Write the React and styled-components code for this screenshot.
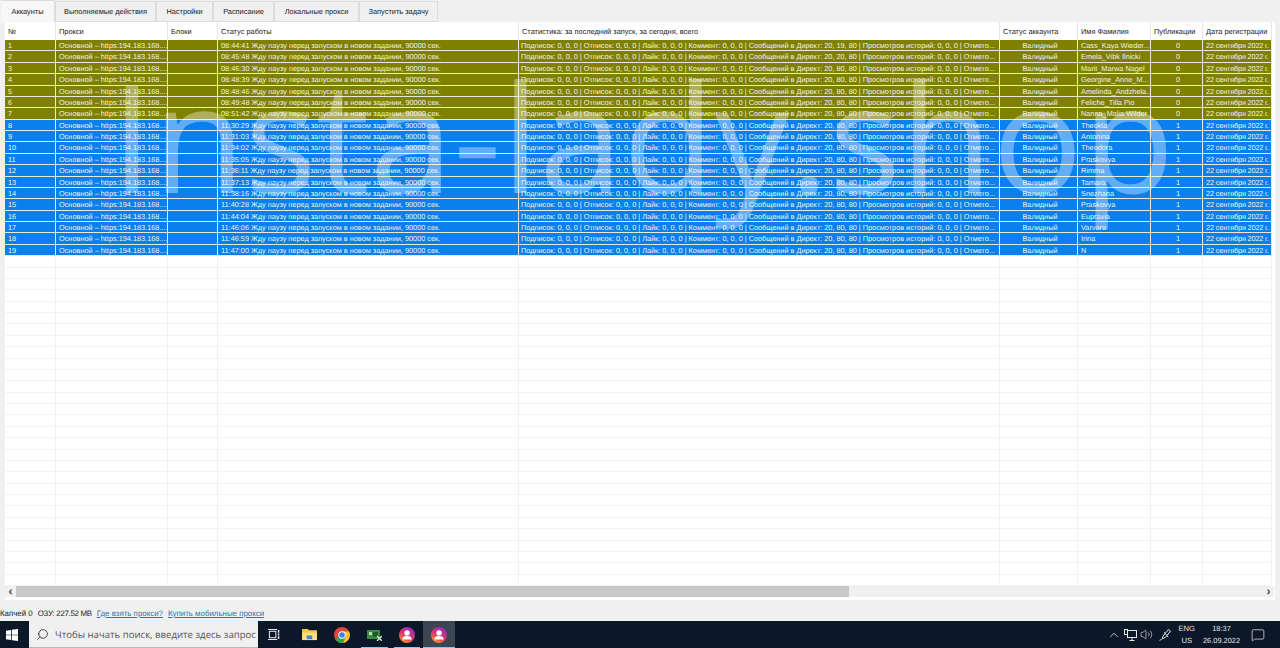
import styled, { createGlobalStyle } from "styled-components";
import { Search, ChevronUp, Volume2, MessageSquare } from "lucide-react";

const COLUMNS = "51px 112px 50px 301px 481px 78px 73px 52px 69px";

const GlobalStyle = createGlobalStyle`
    html, body {
        margin: 0;
        padding: 0;
        height: 100%;
        overflow: hidden;
        background: #f0f0f0;
    }
    body {
        font-family: "Liberation Sans", Arial, sans-serif;
        text-rendering: geometricPrecision;
    }
`;

const tabs = ["Аккаунты", "Выполняемые действия", "Настройки", "Расписание", "Локальные прокси", "Запустить задачу"];
const tabWidths = [54, 101, 57, 61, 85, 79];

const headers = ["№", "Прокси", "Блоки", "Статус работы", "Статистика: за последний запуск, за сегодня, всего", "Статус аккаунта", "Имя Фамилия", "Публикации", "Дата регистрации"];

const accounts = [
    ["08:44:41", "20, 19, 80", "Cass_Kaya Wieder..."],
    ["08:45:48", "20, 20, 80", "Emela_Vibk Ilnicki"],
    ["08:46:30", "20, 80, 80", "Marit_Marwa Nagel"],
    ["08:48:39", "20, 80, 80", "Georgine_Anne_M..."],
    ["08:48:46", "20, 80, 80", "Amelinda_Andzhela..."],
    ["08:49:48", "20, 80, 80", "Feliche_Tilla Pio"],
    ["08:51:42", "20, 80, 80", "Nanna_Malia Wilder"],
    ["11:30:29", "20, 80, 80", "Theokla"],
    ["11:31:03", "20, 80, 80", "Antonina"],
    ["11:34:02", "20, 80, 80", "Theodora"],
    ["11:35:05", "20, 80, 80", "Praskovya"],
    ["11:36:11", "20, 80, 80", "Rimma"],
    ["11:37:13", "20, 80, 80", "Tamara"],
    ["11:38:16", "20, 80, 80", "Snezhana"],
    ["11:40:28", "20, 80, 80", "Praskovya"],
    ["11:44:04", "20, 80, 80", "Eupraxia"],
    ["11:46:06", "20, 80, 80", "Varvara"],
    ["11:46:59", "20, 80, 80", "Irina"],
    ["11:47:00", "20, 80, 80", "N"],
];

function WindowsLogo() {
    return (
        <svg width="12" height="12" viewBox="0 0 14 14" fill="#fff">
            <path d="M0 2 L6 1.1 V6.6 H0 Z" />
            <path d="M6.9 1 L14 0 V6.6 H6.9 Z" />
            <path d="M0 7.4 H6 V12.9 L0 12 Z" />
            <path d="M6.9 7.4 H14 V14 L6.9 13 Z" />
        </svg>
    );
}

function TaskView() {
    return (
        <svg width="12" height="11" viewBox="0 0 13 12" fill="none" stroke="#e8e8e8" strokeWidth="1.1">
            <rect x="1.5" y="2.5" width="7" height="7" />
            <path d="M0 0.6 H10 M0 11.4 H10" />
            <path d="M11.5 1 V4 M11.5 5 V7 M11.5 8 V11" strokeWidth="1.6" />
        </svg>
    );
}

function FolderIcon() {
    return (
        <svg width="15" height="13" viewBox="0 0 16 14">
            <path d="M0 1 H6 L7.5 2.5 H16 V13 H0 Z" fill="#f5c84c" />
            <path d="M0 5 H16 V13 H0 Z" fill="#ffdf7e" />
            <rect x="5" y="8" width="6" height="4" fill="#3d8fc9" />
        </svg>
    );
}

function ChromeIcon() {
    return (
        <svg width="16" height="16" viewBox="0 0 32 32">
            <circle cx="16" cy="16" r="16" fill="#e2453a" />
            <path d="M16 16 L2.1 24 A16 16 0 0 0 18 31.9 L24 18 Z" fill="#2fa551" />
            <path d="M16 9 H30 A16 16 0 0 1 18 31.9 L24 18 Z" fill="#fbc62f" />
            <circle cx="16" cy="16" r="7.4" fill="#fff" />
            <circle cx="16" cy="16" r="5.6" fill="#3f82ee" />
        </svg>
    );
}

function CardIcon() {
    return (
        <svg width="15" height="12" viewBox="0 0 15 12">
            <rect x="0" y="1" width="13" height="9" fill="#3c8a45" />
            <rect x="2" y="3" width="3" height="3" fill="#b6dcae" />
            <rect x="6" y="3" width="5" height="5" fill="#1d5a2a" />
            <path d="M10 7 L15 12 M15 7 L10 12" stroke="#cfe8c8" strokeWidth="1.3" />
        </svg>
    );
}

function InstaIcon({ id }) {
    return (
        <svg width="16" height="16" viewBox="0 0 32 32">
            <defs>
                <linearGradient id={id} x1="0.2" y1="1" x2="0.8" y2="0">
                    <stop offset="0" stopColor="#f7a02c" />
                    <stop offset="0.45" stopColor="#e2336c" />
                    <stop offset="1" stopColor="#8a2fc4" />
                </linearGradient>
            </defs>
            <circle cx="16" cy="16" r="16" fill={`url(#${id})`} />
            <circle cx="16" cy="12" r="5.5" fill="#fff" />
            <path d="M6.5 25 C7 19 11 18 16 18 C21 18 25 19 25.5 25 Z" fill="#fff" />
        </svg>
    );
}

function NetworkIcon() {
    return (
        <svg width="13" height="12" viewBox="0 0 13 12" fill="none" stroke="#e6e6e6" strokeWidth="1">
            <rect x="3.5" y="1.5" width="9" height="7" />
            <path d="M8 8.5 V11 M5.5 11.5 H10.5" />
            <rect x="0.5" y="0.5" width="3" height="5" fill="#0c1727" />
        </svg>
    );
}

function PenIcon() {
    return (
        <svg width="16" height="13" viewBox="-3 0 16 13" fill="none" stroke="#e6e6e6" strokeWidth="1">
            <path d="M4 8 L9.5 1.5 L11.5 3.2 L6 9.7 L3.4 10.6 Z" />
            <path d="M3.4 10.6 C2.4 12 1.4 11.6 0.6 12.4" />
            <path d="M6 4 C4 5 8 6.5 9 9" />
        </svg>
    );
}

function App() {
    return (
        <Page>
            <GlobalStyle />
            <TabBar>
                {tabs.map((tab, i) => (
                    <Tab key={tab} $active={i === 0} $width={tabWidths[i]}>{tab}</Tab>
                ))}
            </TabBar>
            <Content>
                <Table>
                    <HeaderRow>
                        {headers.map(h => <HeaderCell key={h}>{h}</HeaderCell>)}
                    </HeaderRow>
                    <Body>
                        {accounts.map(([time, direct, name], i) => (
                            <Row key={i} $bg={i < 7 ? "#808000" : "#0a7ff0"}>
                                <Cell>{i + 1}</Cell>
                                <Cell>Основной – https:194.183.168....</Cell>
                                <Cell />
                                <Cell>{time} Жду паузу перед запуском в новом задании, 90000 сек.</Cell>
                                <StatCell>Подписок: 0, 0, 0 | Отписок: 0, 0, 0 | Лайк: 0, 0, 0 | Коммент: 0, 0, 0 | Сообщений в Директ: {direct} | Просмотров историй: 0, 0, 0 | Отмето...</StatCell>
                                <Cell $center>Валидный</Cell>
                                <Cell>{name}</Cell>
                                <Cell $center>{i < 7 ? 0 : 1}</Cell>
                                <DateCell>22 сентября 2022 г.</DateCell>
                            </Row>
                        ))}
                        {Array.from({ length: 30 }, (_, i) => (
                            <EmptyRow key={i}>
                                {headers.map(h => <EmptyCell key={h} />)}
                            </EmptyRow>
                        ))}
                    </Body>
                    <ScrollBar>
                        <ScrollArrow>‹</ScrollArrow>
                        <ScrollThumb />
                        <ScrollArrow>›</ScrollArrow>
                    </ScrollBar>
                    <Watermark>Insta-lady.shop</Watermark>
                </Table>
            </Content>
            <StatusBar>
                <span>Капчей 0</span>
                <MemoryText>ОЗУ: 227.52 MB</MemoryText>
                <StatusLink>Где взять прокси?</StatusLink>
                <StatusLink>Купить мобильные прокси</StatusLink>
            </StatusBar>
            <Taskbar>
                <StartButton><WindowsLogo /></StartButton>
                <SearchBox>
                    <Search size={13} color="#333" strokeWidth={1.6} style={{ transform: "scaleX(-1)" }} />
                    <SearchText>Чтобы начать поиск, введите здесь запрос</SearchText>
                </SearchBox>
                <TaskSlot $width={32}><TaskView /></TaskSlot>
                <TaskGap />
                <TaskSlot $width={32}><FolderIcon /></TaskSlot>
                <TaskSlot $width={33}><ChromeIcon /></TaskSlot>
                <TaskSlot $width={33} $running><CardIcon /></TaskSlot>
                <TaskSlot $width={32} $running><InstaIcon id="insta-a" /></TaskSlot>
                <TaskSlot $width={32} $running $active><InstaIcon id="insta-b" /></TaskSlot>
                <Tray>
                    <ChevronUp size={14} color="#e6e6e6" strokeWidth={1.4} />
                    <NetworkIcon />
                    <Volume2 size={13} color="#e6e6e6" strokeWidth={1.2} />
                    <PenIcon />
                    <Lang>ENG<br />US</Lang>
                    <Clock>18:37<br />26.09.2022</Clock>
                    <MessageSquare size={14} color="#e6e6e6" strokeWidth={1.3} />
                </Tray>
            </Taskbar>
        </Page>
    );
}

export default App;

const Page = styled.div`
    display: flex;
    flex-direction: column;
    width: 1280px;
    height: 648px;
    overflow: hidden;
    background-color: #f0f0f0;
`;

const TabBar = styled.div`
    display: flex;
    flex: 0 0 22px;
    height: 22px;
    padding-left: 1px;
    align-items: flex-end;
`;

const Tab = styled.div`
    width: ${props => props.$width}px;
    height: ${props => props.$active ? 22 : 21}px;
    box-sizing: border-box;
    display: flex;
    align-items: center;
    justify-content: center;
    font-size: 7.4px;
    color: #222;
    background-color: ${props => props.$active ? "#f7f7f7" : "#f0f0f0"};
    border: 1px solid #dcdcdc;
    border-left: ${props => props.$active ? "none" : "1px solid #dcdcdc"};
    border-bottom: ${props => props.$active ? "none" : "1px solid #dcdcdc"};
`;

const Content = styled.div`
    flex: 1;
    min-height: 0;
    display: flex;
    padding: 0 5px 4px 5px;
`;

const Table = styled.div`
    position: relative;
    flex: 1;
    min-width: 0;
    display: flex;
    flex-direction: column;
    overflow: hidden;
    padding-bottom: 3px;
    background-color: #fff;
`;

const HeaderRow = styled.div`
    display: grid;
    grid-template-columns: ${COLUMNS};
    flex: 0 0 18px;
    height: 18px;
    width: 1267px;
    background-color: #fff;
`;

const HeaderCell = styled.div`
    display: flex;
    align-items: center;
    padding-left: 3px;
    font-size: 7.4px;
    color: #222;
    white-space: nowrap;
    overflow: hidden;
    border-right: 1px solid #e6e6e6;
`;

const Body = styled.div`
    flex: 1;
    min-height: 0;
    overflow: hidden;
`;

const Row = styled.div`
    display: grid;
    grid-template-columns: ${COLUMNS};
    width: 1267px;
    height: 11.39px;
    box-sizing: border-box;
    background-color: ${props => props.$bg};
    color: #f3f3ea;
    border-bottom: 1px solid #e4ecd8;
`;

const Cell = styled.div`
    padding-left: 3px;
    font-size: 7.33px;
    line-height: 11px;
    white-space: nowrap;
    overflow: hidden;
    text-align: ${props => props.$center ? "center" : "left"};
    border-right: 1px solid #e4ecd8;
`;

const StatCell = styled(Cell)`
    padding-left: 2px;
    letter-spacing: -0.01px;
`;

const DateCell = styled(Cell)`
    letter-spacing: -0.16px;
`;

const EmptyRow = styled.div`
    display: grid;
    grid-template-columns: ${COLUMNS};
    width: 1267px;
    height: 11.39px;
    box-sizing: border-box;
    border-bottom: 1px solid #f3f3f3;
`;

const EmptyCell = styled.div`
    border-right: 1px solid #f0f0f0;
`;

const ScrollBar = styled.div`
    display: flex;
    flex: 0 0 11px;
    height: 11px;
    margin-right: 1px;
    background-color: #f0f0f0;
`;

const ScrollArrow = styled.div`
    flex: 0 0 11px;
    display: flex;
    align-items: center;
    justify-content: center;
    font-size: 12px;
    font-weight: 700;
    line-height: 9px;
    color: #444;

    &:last-child {
        margin-left: auto;
    }
`;

const ScrollThumb = styled.div`
    width: 833px;
    background-color: #c9c9c9;
`;

const Watermark = styled.div`
    position: absolute;
    left: 106px;
    top: 8px;
    font-family: "Open Sans", sans-serif;
    font-size: 150px;
    line-height: 210px;
    white-space: nowrap;
    color: rgba(255, 255, 255, 0.36);
    pointer-events: none;
`;

const StatusBar = styled.div`
    flex: 0 0 17px;
    height: 17px;
    box-sizing: border-box;
    padding-top: 2px;
    display: flex;
    align-items: center;
    gap: 5px;
    font-size: 7.9px;
    color: #222;
    white-space: nowrap;
`;

const MemoryText = styled.span`
    letter-spacing: -0.3px;
`;

const StatusLink = styled.span`
    color: #2f73b0;
    text-decoration: underline;
`;

const Taskbar = styled.div`
    flex: 0 0 27px;
    height: 27px;
    display: flex;
    align-items: stretch;
    background-color: #0c1727;
`;

const StartButton = styled.div`
    flex: 0 0 29px;
    box-sizing: border-box;
    padding-right: 5px;
    display: flex;
    align-items: center;
    justify-content: center;
`;

const SearchBox = styled.div`
    flex: 0 0 229px;
    min-width: 0;
    overflow: hidden;
    box-sizing: border-box;
    display: flex;
    align-items: center;
    gap: 6px;
    padding-left: 7px;
    background-color: #f0f0f0;
    border-bottom: 1px solid #b8b8b8;
`;

const SearchText = styled.span`
    font-family: "Open Sans", sans-serif;
    font-size: 9.6px;
    color: #555;
    white-space: nowrap;
`;

const TaskSlot = styled.div`
    position: relative;
    flex: 0 0 ${props => props.$width}px;
    display: flex;
    align-items: center;
    justify-content: center;
    background-color: ${props => props.$active ? "#3b4652" : "transparent"};

    &::after {
        content: "";
        display: ${props => props.$running ? "block" : "none"};
        position: absolute;
        left: ${props => props.$active ? 0 : 3}px;
        right: ${props => props.$active ? 0 : 3}px;
        bottom: 0;
        height: 1px;
        background-color: #8fc4ea;
    }
`;

const TaskGap = styled.div`
    flex: 0 0 3px;
`;

const Tray = styled.div`
    flex: 1;
    display: flex;
    align-items: center;
    justify-content: flex-end;
    gap: 3px;
    padding-right: 15px;
    color: #e6e6e6;
`;

const Lang = styled.div`
    font-size: 7.6px;
    line-height: 12px;
    text-align: center;
    margin: 0 5px 0 4px;
`;

const Clock = styled.div`
    font-size: 7.4px;
    line-height: 12px;
    text-align: center;
    margin-right: 8px;
`;
